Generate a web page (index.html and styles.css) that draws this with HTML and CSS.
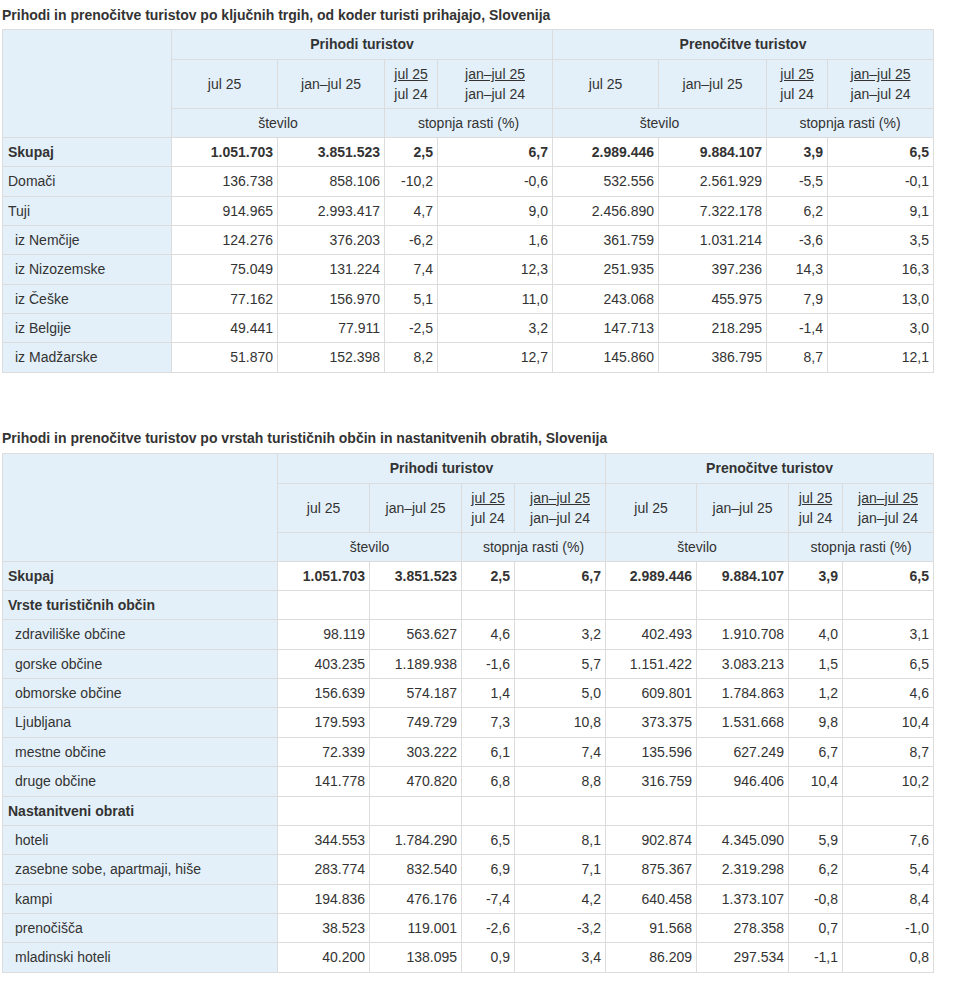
FILE: index.html
```html
<!DOCTYPE html>
<html lang="sl">
<head>
<meta charset="utf-8">
<link rel="stylesheet" href="styles.css">
</head>
<body>
<div class="page">
<h3 class="title first">Prihodi in prenočitve turistov po ključnih trgih, od koder turisti prihajajo, Slovenija</h3>
<table class="data t1">
<colgroup><col class="c0"><col class="c1"><col class="c2"><col class="c3"><col class="c4"><col class="c5"><col class="c6"><col class="c7"><col class="c8"></colgroup>
<thead>
<tr class="h1"><th rowspan="3"></th><th colspan="4" class="b">Prihodi turistov</th><th colspan="4" class="b">Prenočitve turistov</th></tr>
<tr class="h2"><th>jul 25</th><th>jan–jul 25</th><th><span class="num">jul 25</span><span class="den">jul 24</span></th><th><span class="num">jan–jul 25</span><span class="den">jan–jul 24</span></th><th>jul 25</th><th>jan–jul 25</th><th><span class="num">jul 25</span><span class="den">jul 24</span></th><th><span class="num">jan–jul 25</span><span class="den">jan–jul 24</span></th></tr>
<tr class="h3"><th colspan="2">število</th><th colspan="2">stopnja rasti (%)</th><th colspan="2">število</th><th colspan="2">stopnja rasti (%)</th></tr>
</thead>
<tbody>
<tr class="total"><th>Skupaj</th><td>1.051.703</td><td>3.851.523</td><td>2,5</td><td>6,7</td><td>2.989.446</td><td>9.884.107</td><td>3,9</td><td>6,5</td></tr>
<tr><th>Domači</th><td>136.738</td><td>858.106</td><td>-10,2</td><td>-0,6</td><td>532.556</td><td>2.561.929</td><td>-5,5</td><td>-0,1</td></tr>
<tr><th>Tuji</th><td>914.965</td><td>2.993.417</td><td>4,7</td><td>9,0</td><td>2.456.890</td><td>7.322.178</td><td>6,2</td><td>9,1</td></tr>
<tr><th class="ind">iz Nemčije</th><td>124.276</td><td>376.203</td><td>-6,2</td><td>1,6</td><td>361.759</td><td>1.031.214</td><td>-3,6</td><td>3,5</td></tr>
<tr><th class="ind">iz Nizozemske</th><td>75.049</td><td>131.224</td><td>7,4</td><td>12,3</td><td>251.935</td><td>397.236</td><td>14,3</td><td>16,3</td></tr>
<tr><th class="ind">iz Češke</th><td>77.162</td><td>156.970</td><td>5,1</td><td>11,0</td><td>243.068</td><td>455.975</td><td>7,9</td><td>13,0</td></tr>
<tr><th class="ind">iz Belgije</th><td>49.441</td><td>77.911</td><td>-2,5</td><td>3,2</td><td>147.713</td><td>218.295</td><td>-1,4</td><td>3,0</td></tr>
<tr><th class="ind">iz Madžarske</th><td>51.870</td><td>152.398</td><td>8,2</td><td>12,7</td><td>145.860</td><td>386.795</td><td>8,7</td><td>12,1</td></tr>
</tbody>
</table>

<h3 class="title second">Prihodi in prenočitve turistov po vrstah turističnih občin in nastanitvenih obratih, Slovenija</h3>
<table class="data t2">
<colgroup><col class="c0"><col class="c1"><col class="c2"><col class="c3"><col class="c4"><col class="c5"><col class="c6"><col class="c7"><col class="c8"></colgroup>
<thead>
<tr class="h1"><th rowspan="3"></th><th colspan="4" class="b">Prihodi turistov</th><th colspan="4" class="b">Prenočitve turistov</th></tr>
<tr class="h2"><th>jul 25</th><th>jan–jul 25</th><th><span class="num">jul 25</span><span class="den">jul 24</span></th><th><span class="num">jan–jul 25</span><span class="den">jan–jul 24</span></th><th>jul 25</th><th>jan–jul 25</th><th><span class="num">jul 25</span><span class="den">jul 24</span></th><th><span class="num">jan–jul 25</span><span class="den">jan–jul 24</span></th></tr>
<tr class="h3"><th colspan="2">število</th><th colspan="2">stopnja rasti (%)</th><th colspan="2">število</th><th colspan="2">stopnja rasti (%)</th></tr>
</thead>
<tbody>
<tr class="total"><th>Skupaj</th><td>1.051.703</td><td>3.851.523</td><td>2,5</td><td>6,7</td><td>2.989.446</td><td>9.884.107</td><td>3,9</td><td>6,5</td></tr>
<tr class="group"><th>Vrste turističnih občin</th><td></td><td></td><td></td><td></td><td></td><td></td><td></td><td></td></tr>
<tr><th class="ind">zdraviliške občine</th><td>98.119</td><td>563.627</td><td>4,6</td><td>3,2</td><td>402.493</td><td>1.910.708</td><td>4,0</td><td>3,1</td></tr>
<tr><th class="ind">gorske občine</th><td>403.235</td><td>1.189.938</td><td>-1,6</td><td>5,7</td><td>1.151.422</td><td>3.083.213</td><td>1,5</td><td>6,5</td></tr>
<tr><th class="ind">obmorske občine</th><td>156.639</td><td>574.187</td><td>1,4</td><td>5,0</td><td>609.801</td><td>1.784.863</td><td>1,2</td><td>4,6</td></tr>
<tr><th class="ind">Ljubljana</th><td>179.593</td><td>749.729</td><td>7,3</td><td>10,8</td><td>373.375</td><td>1.531.668</td><td>9,8</td><td>10,4</td></tr>
<tr><th class="ind">mestne občine</th><td>72.339</td><td>303.222</td><td>6,1</td><td>7,4</td><td>135.596</td><td>627.249</td><td>6,7</td><td>8,7</td></tr>
<tr><th class="ind">druge občine</th><td>141.778</td><td>470.820</td><td>6,8</td><td>8,8</td><td>316.759</td><td>946.406</td><td>10,4</td><td>10,2</td></tr>
<tr class="group"><th>Nastanitveni obrati</th><td></td><td></td><td></td><td></td><td></td><td></td><td></td><td></td></tr>
<tr><th class="ind">hoteli</th><td>344.553</td><td>1.784.290</td><td>6,5</td><td>8,1</td><td>902.874</td><td>4.345.090</td><td>5,9</td><td>7,6</td></tr>
<tr><th class="ind">zasebne sobe, apartmaji, hiše</th><td>283.774</td><td>832.540</td><td>6,9</td><td>7,1</td><td>875.367</td><td>2.319.298</td><td>6,2</td><td>5,4</td></tr>
<tr><th class="ind">kampi</th><td>194.836</td><td>476.176</td><td>-7,4</td><td>4,2</td><td>640.458</td><td>1.373.107</td><td>-0,8</td><td>8,4</td></tr>
<tr><th class="ind">prenočišča</th><td>38.523</td><td>119.001</td><td>-2,6</td><td>-3,2</td><td>91.568</td><td>278.358</td><td>0,7</td><td>-1,0</td></tr>
<tr><th class="ind">mladinski hoteli</th><td>40.200</td><td>138.095</td><td>0,9</td><td>3,4</td><td>86.209</td><td>297.534</td><td>-1,1</td><td>0,8</td></tr>
</tbody>
</table>
</div>
</body>
</html>
```
FILE: styles.css
```css
html, body {
  margin: 0;
  padding: 0;
  background: #fff;
}
body {
  font-family: "Liberation Sans", Arial, sans-serif;
  font-size: 14px;
  color: #333;
}
.page {
  padding: 0 0 0 2px;
}
.title {
  margin: 0;
  font-size: 14px;
  font-weight: bold;
  line-height: 16px;
  color: #333;
}
.title.first {
  padding-top: 7px;
  margin-bottom: 6px;
}
.title.second {
  margin-top: 57px;
  margin-bottom: 7px;
}
.data {
  border-collapse: collapse;
  table-layout: fixed;
  width: 931px;
}
.data th, .data td {
  border: 1px solid #dcdcdc;
  padding: 6px 4px 6px 5px;
  line-height: 16.35px;
  font-size: 14px;
  white-space: nowrap;
  overflow: hidden;
}
.data thead th {
  background: #e4f0f9;
  font-weight: normal;
  text-align: center;
  padding: 6px 4px;
}
.data thead th.b {
  font-weight: bold;
  line-height: 17px;
}
.data thead .h2 th {
  padding: 4px 4px;
  line-height: 20px;
}
.data thead .h3 th {
  line-height: 16px;
}
.num, .den {
  display: block;
}
.num {
  text-decoration: underline;
}
.data tbody th {
  background: #e4f0f9;
  text-align: left;
  font-weight: normal;
}
.data tbody th.ind {
  padding-left: 12px;
}
.data tbody td {
  text-align: right;
  background: #fff;
}
.data tbody tr.total th,
.data tbody tr.total td,
.data tbody tr.group th {
  font-weight: bold;
}
.t1 .c0 { width: 169px; }
.t1 .c1 { width: 106px; }
.t1 .c2 { width: 107px; }
.t1 .c3 { width: 53px; }
.t1 .c4 { width: 115px; }
.t1 .c5 { width: 106px; }
.t1 .c6 { width: 108px; }
.t1 .c7 { width: 61px; }
.t1 .c8 { width: 106px; }
.t2 .c0 { width: 275px; }
.t2 .c1 { width: 92px; }
.t2 .c2 { width: 92px; }
.t2 .c3 { width: 53px; }
.t2 .c4 { width: 91px; }
.t2 .c5 { width: 91px; }
.t2 .c6 { width: 92px; }
.t2 .c7 { width: 54px; }
.t2 .c8 { width: 91px; }
```
